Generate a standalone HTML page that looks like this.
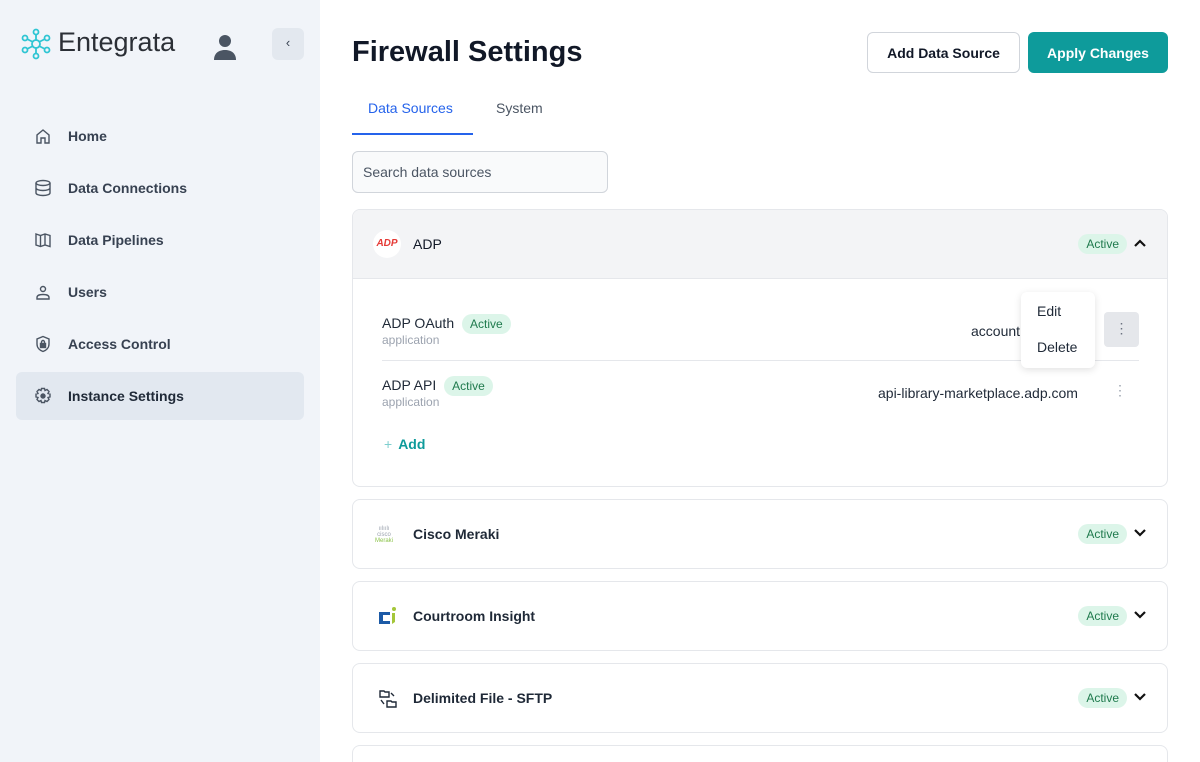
<!DOCTYPE html>
<html><head><meta charset="utf-8"><style>
*{box-sizing:border-box;margin:0;padding:0}
html,body{width:1200px;height:762px;overflow:hidden}
body{font-family:"Liberation Sans",sans-serif;background:#fff;color:#111827}
#wrap{position:relative;width:1200px;height:762px;overflow:hidden}
.side{position:absolute;left:0;top:0;width:320px;height:762px;background:#f1f4f9}
.abs{position:absolute}
.nav{position:absolute;left:16px;width:288px;height:48px;border-radius:6px;display:flex;align-items:center;padding-left:18px;font-size:14px;color:#374151;font-weight:600}
.nav svg{width:18px;height:18px;margin-right:16px;fill:none;stroke:#4b5563;stroke-width:1.4}
.btn{position:absolute;top:32px;height:41px;border-radius:6px;font-size:14px;font-weight:600;display:flex;align-items:center;justify-content:center}
.badge{display:inline-block;background:#dcf5e9;color:#1f7a4d;font-size:12px;padding:3px 8px;border-radius:10px;font-weight:500}
.card{position:absolute;left:352px;width:816px;height:70px;border:1px solid #e5e7eb;border-radius:8px;background:#fff}
.card .name{position:absolute;left:60px;top:26px;font-size:14px;font-weight:600;color:#1f2937}
.card .badge{position:absolute;right:40px;top:24px}
.chev{position:absolute;right:20px;top:26px;width:14px;height:14px}
</style></head><body><div id="wrap">
<div class="side">
  <svg class="abs" style="left:20px;top:28px" width="32" height="32" viewBox="0 0 32 32" fill="none" stroke="#2ec5d3" stroke-width="1.8"><circle cx="16" cy="16" r="4"/><circle cx="16" cy="4" r="2.5"/><circle cx="16" cy="28" r="2.5"/><circle cx="5" cy="10" r="2.5"/><circle cx="27" cy="10" r="2.5"/><circle cx="5" cy="22" r="2.5"/><circle cx="27" cy="22" r="2.5"/><path d="M16 7v5M16 20v5M7 11l6 3M25 11l-6 3M7 21l6-3M25 21l-6-3"/></svg>
  <div class="abs" style="left:58px;top:27px;font-size:27px;color:#2b2f36">Entegrata</div>
  <svg class="abs" style="left:213px;top:33px" width="24" height="27" viewBox="0 0 24 27" fill="#4b5563"><circle cx="12" cy="8" r="6"/><path d="M1 27c0-7 5-10 11-10s11 3 11 10z"/></svg>
  <div class="abs" style="left:272px;top:28px;width:32px;height:32px;background:#e3e8ef;border-radius:6px;text-align:center;line-height:30px;font-size:13px;color:#374151">‹</div>
  <div class="nav" style="top:112px"><svg viewBox="0 0 18 18"><path d="M3 16V8l6-5 6 5v8h-4v-5H7v5z"/></svg>Home</div>
  <div class="nav" style="top:164px"><svg viewBox="0 0 18 18"><ellipse cx="9" cy="4" rx="7" ry="2.5"/><path d="M2 4v10c0 1.4 3 2.5 7 2.5s7-1.1 7-2.5V4M2 9c0 1.4 3 2.5 7 2.5s7-1.1 7-2.5"/></svg>Data Connections</div>
  <div class="nav" style="top:216px"><svg viewBox="0 0 18 18"><path d="M2 3l4.5 1.5L11 3l5 1.5v11L11 14l-4.5 1.5L2 14zM6.5 4.5v11M11 3v11"/></svg>Data Pipelines</div>
  <div class="nav" style="top:268px"><svg viewBox="0 0 18 18"><circle cx="9" cy="6" r="2.5"/><path d="M3 16v-1.5c0-2 2-3 6-3s6 1 6 3V16z"/></svg>Users</div>
  <div class="nav" style="top:320px"><svg viewBox="0 0 18 18"><path d="M9 1.5l6 2.5v5c0 4-3 6.5-6 7.5-3-1-6-3.5-6-7.5V4z"/><rect x="6.5" y="8.5" width="5" height="4" fill="#4b5563"/><path d="M7.5 8.5V7a1.5 1.5 0 013 0v1.5"/></svg>Access Control</div>
  <div class="nav" style="top:372px;background:#e2e8f0;color:#1f2937"><svg viewBox="0 0 18 18"><circle cx="9" cy="9" r="2" fill="#4b5563"/><path d="M7.5 1.5h3l.5 2 2-1 2 2-1 2 2 .5v3l-2 .5 1 2-2 2-2-1-.5 2h-3l-.5-2-2 1-2-2 1-2-2-.5v-3l2-.5-1-2 2-2 2 1z"/></svg>Instance Settings</div>
</div>

<div class="abs" style="left:352px;top:36px;font-size:29px;font-weight:700;color:#111827">Firewall Settings</div>
<div class="btn" style="left:867px;width:153px;border:1px solid #d1d5db;color:#111827;background:#fff">Add Data Source</div>
<div class="btn" style="left:1028px;width:140px;background:#0e9b9b;color:#fff">Apply Changes</div>

<div class="abs" style="left:368px;top:100px;font-size:14px;color:#2563eb;font-weight:500">Data Sources</div>
<div class="abs" style="left:496px;top:100px;font-size:14px;color:#4b5563;font-weight:500">System</div>
<div class="abs" style="left:352px;top:133px;width:121px;height:2px;background:#2563eb"></div>

<div class="abs" style="left:352px;top:151px;width:256px;height:42px;border:1px solid #d1d5db;border-radius:6px;background:#f9fafb;padding:12px 10px;font-size:14px;color:#4b5563">Search data sources</div>

<div class="abs" style="left:352px;top:209px;width:816px;height:278px;border:1px solid #e5e7eb;border-radius:8px;overflow:hidden">
  <div style="height:69px;background:#f3f4f6;border-bottom:1px solid #e5e7eb;position:relative">
    <div class="abs" style="left:20px;top:20px;width:28px;height:28px;border-radius:14px;background:#fff;color:#e53935;font-size:10px;font-weight:700;font-style:italic;text-align:center;line-height:28px">ADP</div>
    <div class="abs" style="left:60px;top:26px;font-size:14px;font-weight:500">ADP</div>
    <span class="badge" style="position:absolute;right:40px;top:24px">Active</span>
    <svg class="chev" viewBox="0 0 14 14"><path d="M2 10l5-5 5 5" stroke="#111" stroke-width="2.2" fill="none"/></svg>
  </div>
  <div class="abs" style="left:29px;top:104px;font-size:14px;color:#1f2937">ADP OAuth <span class="badge" style="margin-left:4px">Active</span></div>
  <div class="abs" style="left:29px;top:123px;font-size:12px;color:#9ca3af">application</div>
  <div class="abs" style="left:618px;top:113px;font-size:14px;color:#1f2937">account</div>
  <div class="abs" style="left:751px;top:102px;width:35px;height:35px;background:#e5e7eb;border-radius:4px;text-align:center;line-height:33px;color:#6b7280;font-size:14px">⋮</div>
  <div class="abs" style="left:29px;top:150px;width:757px;height:1px;background:#e5e7eb"></div>
  <div class="abs" style="left:29px;top:166px;font-size:14px;color:#1f2937">ADP API <span class="badge" style="margin-left:4px">Active</span></div>
  <div class="abs" style="left:29px;top:185px;font-size:12px;color:#9ca3af">application</div>
  <div class="abs" style="left:525px;top:175px;font-size:14px;color:#1f2937">api-library-marketplace.adp.com</div>
  <div class="abs" style="left:760px;top:172px;color:#9ca3af;font-size:14px">⋮</div>
  <div class="abs" style="left:31px;top:226px;font-size:14px;color:#0e9b9b;font-weight:600"><span style="color:#7fcfcf;font-weight:400;margin-right:6px">+</span>Add</div>
</div>
<div class="abs" style="left:1021px;top:292px;width:74px;height:76px;background:#fff;border-radius:6px;box-shadow:0 2px 8px rgba(0,0,0,.12);font-size:14px;color:#1f2937">
  <div style="position:absolute;left:16px;top:11px">Edit</div>
  <div style="position:absolute;left:16px;top:47px">Delete</div>
</div>

<div class="card" style="top:499px"><div class="abs" style="left:22px;top:26px;font-size:6px;line-height:6px;color:#9ca3af;text-align:center">ıılıılı<br>cisco<br><span style="color:#8bc34a">Meraki</span></div><div class="name">Cisco Meraki</div><span class="badge">Active</span><svg class="chev" viewBox="0 0 14 14"><path d="M2 4l5 5 5-5" stroke="#111" stroke-width="2.2" fill="none"/></svg></div>
<div class="card" style="top:581px"><svg class="abs" style="left:25px;top:24px" width="20" height="20" viewBox="0 0 20 20"><path d="M1 6h11v3H5v6h7v3H1z" fill="#1c5aa6"/><circle cx="16" cy="3" r="2" fill="#a4c639"/><path d="M14 7h3v9l-3 2z" fill="#a4c639"/></svg><div class="name">Courtroom Insight</div><span class="badge">Active</span><svg class="chev" viewBox="0 0 14 14"><path d="M2 4l5 5 5-5" stroke="#111" stroke-width="2.2" fill="none"/></svg></div>
<div class="card" style="top:663px"><svg class="abs" style="left:25px;top:25px" width="20" height="20" viewBox="0 0 20 20" fill="none" stroke="#1f2937" stroke-width="1.4"><path d="M2 2h4l1 1h4v5H2zM9 12h4l1 1h4v5H9zM13 4l3 3M3 11l3 4"/></svg><div class="name">Delimited File - SFTP</div><span class="badge">Active</span><svg class="chev" viewBox="0 0 14 14"><path d="M2 4l5 5 5-5" stroke="#111" stroke-width="2.2" fill="none"/></svg></div>
<div class="abs" style="left:352px;top:745px;width:816px;height:17px;border:1px solid #e5e7eb;border-bottom:none;border-radius:8px 8px 0 0"></div>
</div></body></html>
